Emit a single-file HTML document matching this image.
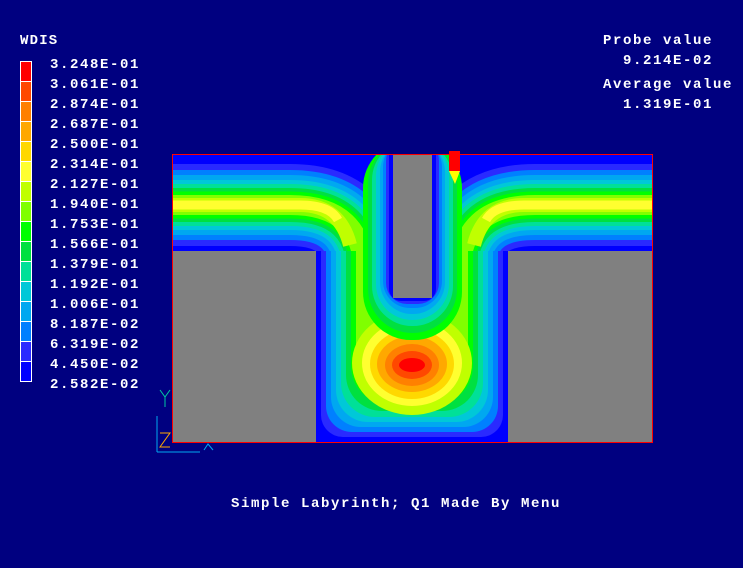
<!DOCTYPE html>
<html><head><meta charset="utf-8"><style>
html,body{margin:0;padding:0;background:#000080;width:743px;height:568px;overflow:hidden}
.t{position:absolute;color:#fff;font:bold 14px "Liberation Mono",monospace;letter-spacing:1.6px;white-space:pre;line-height:14px}
</style></head><body>
<div class="t" style="left:20px;top:34px;letter-spacing:1.2px">WDIS</div>
<div style="position:absolute;left:20px;top:61px;width:10px;border:1px solid #fff">
<div style="height:19px;background:#ff0000;border-bottom:1px solid #fff"></div>
<div style="height:19px;background:#ff4800;border-bottom:1px solid #fff"></div>
<div style="height:19px;background:#ff8000;border-bottom:1px solid #fff"></div>
<div style="height:19px;background:#ffa800;border-bottom:1px solid #fff"></div>
<div style="height:19px;background:#ffd800;border-bottom:1px solid #fff"></div>
<div style="height:19px;background:#ffff30;border-bottom:1px solid #fff"></div>
<div style="height:19px;background:#c0ff00;border-bottom:1px solid #fff"></div>
<div style="height:19px;background:#80ff00;border-bottom:1px solid #fff"></div>
<div style="height:19px;background:#00ff00;border-bottom:1px solid #fff"></div>
<div style="height:19px;background:#00e040;border-bottom:1px solid #fff"></div>
<div style="height:19px;background:#00e098;border-bottom:1px solid #fff"></div>
<div style="height:19px;background:#00c8d8;border-bottom:1px solid #fff"></div>
<div style="height:19px;background:#00a8f0;border-bottom:1px solid #fff"></div>
<div style="height:19px;background:#0080ff;border-bottom:1px solid #fff"></div>
<div style="height:19px;background:#2a2aff;border-bottom:1px solid #fff"></div>
<div style="height:19px;background:#0000ff"></div>
</div>
<div class="t" style="left:50px;top:55px;line-height:20px">3.248E-01
3.061E-01
2.874E-01
2.687E-01
2.500E-01
2.314E-01
2.127E-01
1.940E-01
1.753E-01
1.566E-01
1.379E-01
1.192E-01
1.006E-01
8.187E-02
6.319E-02
4.450E-02
2.582E-02</div>
<div class="t" style="left:603px;top:34px">Probe value</div>
<div class="t" style="left:623px;top:54px">9.214E-02</div>
<div class="t" style="left:603px;top:78px">Average value</div>
<div class="t" style="left:623px;top:98px">1.319E-01</div>
<div class="t" style="left:231px;top:497px">Simple Labyrinth; Q1 Made By Menu</div>
<svg width="743" height="568" style="position:absolute;left:0;top:0">
<defs><clipPath id="c"><rect x="173" y="155" width="479" height="287"/></clipPath>
<clipPath id="b"><rect x="300" y="251" width="230" height="200"/></clipPath>
<path id="l" d="M160,205 H290 Q364,205 364,275 V300"/>
<path id="r" d="M665,205 H535 Q460,205 460,275 V300"/>
</defs>
<g clip-path="url(#c)">
<rect x="173" y="155" width="479" height="287" fill="#0000ff"/>
<g fill="none">
<use href="#l" stroke="#0000ff" stroke-width="96"/><use href="#r" stroke="#0000ff" stroke-width="96"/>
<use href="#l" stroke="#2a2aff" stroke-width="82"/><use href="#r" stroke="#2a2aff" stroke-width="82"/>
<use href="#l" stroke="#0080ff" stroke-width="70"/><use href="#r" stroke="#0080ff" stroke-width="70"/>
<use href="#l" stroke="#00a8f0" stroke-width="60"/><use href="#r" stroke="#00a8f0" stroke-width="60"/>
<use href="#l" stroke="#00c8d8" stroke-width="50"/><use href="#r" stroke="#00c8d8" stroke-width="50"/>
<use href="#l" stroke="#00e098" stroke-width="42"/><use href="#r" stroke="#00e098" stroke-width="42"/>
<use href="#l" stroke="#00e040" stroke-width="34"/><use href="#r" stroke="#00e040" stroke-width="34"/>
<use href="#l" stroke="#00ff00" stroke-width="27"/><use href="#r" stroke="#00ff00" stroke-width="27"/>
<use href="#l" stroke="#80ff00" stroke-width="20"/><use href="#r" stroke="#80ff00" stroke-width="20"/>
<path d="M160,205 H300 Q340,205 350,245 M474,245 Q484,205 524,205 H665" stroke="#c0ff00" stroke-width="14"/>
<path d="M160,205 H300 Q330,205 338,220 M486,220 Q494,205 524,205 H665" stroke="#ffff30" stroke-width="9"/>
</g>
<g clip-path="url(#b)">
<rect x="316" y="200" width="192" height="242" fill="#0000ff"/>
<rect x="321" y="200" width="182" height="237" rx="22" fill="#2a2aff"/>
<rect x="326" y="200" width="172" height="232" rx="26" fill="#0080ff"/>
<rect x="331" y="200" width="162" height="227" rx="30" fill="#00a8f0"/>
<rect x="336" y="200" width="152" height="222" rx="32" fill="#00c8d8"/>
<rect x="341" y="200" width="142" height="217" rx="34" fill="#00e098"/>
<rect x="346" y="200" width="132" height="211" rx="36" fill="#00e040"/>
<rect x="351" y="200" width="122" height="204" rx="38" fill="#00ff00"/>
<rect x="356" y="200" width="112" height="196" rx="40" fill="#80ff00"/>
</g>
<ellipse cx="412" cy="363" rx="60" ry="52" fill="#c0ff00"/>
<ellipse cx="412" cy="363" rx="50" ry="43" fill="#ffff30"/>
<ellipse cx="412" cy="364" rx="42" ry="35" fill="#ffd800"/>
<ellipse cx="412" cy="364" rx="35" ry="28" fill="#ffa800"/>
<ellipse cx="412" cy="365" rx="27" ry="21" fill="#ff8000"/>
<ellipse cx="412" cy="365" rx="20" ry="14" fill="#ff4800"/>
<ellipse cx="412" cy="365" rx="13" ry="7" fill="#ff0000"/>
<rect x="363" y="140" width="99" height="200" rx="48" fill="#00ff00"/>
<rect x="368" y="140" width="89" height="193" rx="44" fill="#00e040"/>
<rect x="372" y="140" width="81" height="186" rx="40" fill="#00e098"/>
<rect x="376" y="140" width="73" height="180" rx="36" fill="#00c8d8"/>
<rect x="380" y="140" width="65" height="174" rx="32" fill="#00a8f0"/>
<rect x="383" y="140" width="59" height="168" rx="27" fill="#0080ff"/>
<rect x="386" y="140" width="53" height="164" rx="21" fill="#2a2aff"/>
<rect x="389" y="140" width="47" height="161" rx="12" fill="#0000ff"/>
<rect x="173" y="251" width="143" height="191" fill="#808080"/>
<rect x="508" y="251" width="144" height="191" fill="#808080"/>
<rect x="393" y="155" width="39" height="143" fill="#808080"/>
</g>
<rect x="172.5" y="154.5" width="480" height="288" fill="none" stroke="#ff0000" stroke-width="1"/>
<rect x="449" y="151" width="11" height="20" fill="#ff0000"/>
<path d="M449,171 H460 L455,184 Z" fill="#ffff00"/>
<path d="M157,452 V416 M157,452 H200" stroke="#00a8f0" stroke-width="1" fill="none"/>
<path d="M160,390 L165,397 L170,390 M165,397 V407" stroke="#00c8a0" stroke-width="1" fill="none"/>
<path d="M160,433 H170 L160,447 H170" stroke="#ffa800" stroke-width="1" fill="none"/>
<path d="M204,450 L208,444 L213,450" stroke="#00a8f0" stroke-width="1" fill="none"/>
</svg>
</body></html>
